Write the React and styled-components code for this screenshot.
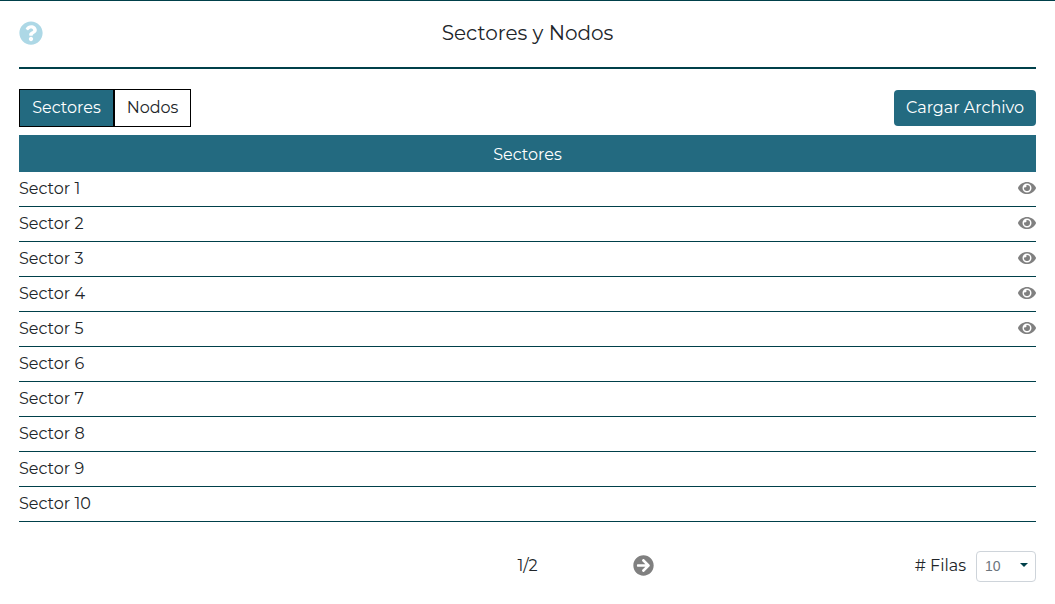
import React from "react";
import styled, { createGlobalStyle } from "styled-components";
import { FaQuestionCircle, FaEye, FaArrowCircleRight } from "react-icons/fa";

const GlobalStyle = createGlobalStyle`
  *, *::before, *::after { box-sizing: border-box; }
  body {
    margin: 0;
    background: #fff;
    color: #212529;
    font-family: Montserrat, Inter, sans-serif;
    font-size: 16px;
    line-height: 24px;
    font-weight: 400;
  }
  button { font: inherit; margin: 0; cursor: pointer; }
`;

const Page = styled.main`
  height: 604px;
  padding: 0 19px;
  border-top: 1px solid #00404a;
  overflow: hidden;
`;

const Header = styled.header`
  display: grid;
  grid-template-columns: 24px 1fr 24px;
  align-items: center;
  height: 68px;
  padding-bottom: 2px;
  border-bottom: 2px solid #00404a;
`;

const HelpIcon = styled(FaQuestionCircle)`
  width: 24px;
  height: 24px;
  color: #add8e6;
`;

const Title = styled.h1`
  margin: 0;
  font-size: 20px;
  font-weight: 400;
  text-align: center;
`;

const Toolbar = styled.div`
  display: flex;
  justify-content: space-between;
  align-items: center;
  height: 38px;
  margin-top: 20px;
`;

const Tabs = styled.div`
  display: flex;
`;

const Tab = styled.button`
  width: ${({ $width }) => $width}px;
  height: 38px;
  padding: 0;
  border: 1px solid #000;
  background: ${({ $active }) => ($active ? "#236a80" : "#fff")};
  color: ${({ $active }) => ($active ? "#fff" : "#212529")};
`;

const UploadButton = styled.button`
  width: 142px;
  height: 36px;
  padding: 0;
  border: 0;
  border-radius: 4px;
  background: #236a80;
  color: #fff;
`;

const TableHead = styled.div`
  height: 37px;
  margin-top: 8px;
  padding-top: 8px;
  background: #236a80;
  color: #fff;
  text-align: center;
`;

const Rows = styled.ul`
  margin: 0;
  padding: 0;
  list-style: none;
`;

const Row = styled.li`
  display: flex;
  justify-content: space-between;
  align-items: flex-start;
  height: 35px;
  padding-top: 5px;
  border-bottom: 1px solid #00404a;
`;

const EyeIcon = styled(FaEye)`
  width: 18px;
  height: 16px;
  margin-top: 3px;
  color: #808080;
`;

const Footer = styled.footer`
  display: grid;
  grid-template-columns: 1fr auto 1fr;
  align-items: center;
  height: 31px;
  margin-top: 29px;
`;

const PageCount = styled.span`
  grid-column: 2;
  padding-bottom: 2px;
`;

const FooterRight = styled.div`
  display: flex;
  align-items: center;
  justify-content: space-between;
  padding-left: 95px;
`;

const NextIcon = styled(FaArrowCircleRight)`
  width: 21px;
  height: 21px;
  margin-bottom: 2px;
  color: #808080;
`;

const RowsPerPage = styled.label`
  display: flex;
  align-items: center;
  gap: 10px;
`;

const RowsLabel = styled.span`
  padding-bottom: 2px;
`;

const SelectBox = styled.button`
  display: flex;
  align-items: center;
  justify-content: space-between;
  width: 60px;
  height: 31px;
  padding: 0 7.5px 2px 8px;
  border: 1px solid #ced4da;
  border-radius: 4px;
  background: #fff;
  color: #6c757d;
  font-family: "Liberation Sans", Arial, sans-serif;
  font-size: 14px;
`;

const Caret = styled.svg`
  width: 8px;
  height: 4px;
  margin-top: -1px;
  fill: #00404a;
`;

const sectors = Array.from({ length: 10 }, (_, i) => ({
  name: `Sector ${i + 1}`,
  visible: i < 5,
}));

export default function App() {
  return (
    <>
      <GlobalStyle />
      <Page>
        <Header>
          <HelpIcon />
          <Title>Sectores y Nodos</Title>
        </Header>
        <Toolbar>
          <Tabs>
            <Tab $active $width={95}>Sectores</Tab>
            <Tab $width={77}>Nodos</Tab>
          </Tabs>
          <UploadButton>Cargar Archivo</UploadButton>
        </Toolbar>
        <TableHead>Sectores</TableHead>
        <Rows>
          {sectors.map(({ name, visible }) => (
            <Row key={name}>
              <span>{name}</span>
              {visible && <EyeIcon />}
            </Row>
          ))}
        </Rows>
        <Footer>
          <PageCount>1/2</PageCount>
          <FooterRight>
            <NextIcon />
            <RowsPerPage>
              <RowsLabel># Filas</RowsLabel>
              <SelectBox type="button">
                10
                <Caret viewBox="0 0 8 4">
                  <path d="M0 0h8L4 4z" />
                </Caret>
              </SelectBox>
            </RowsPerPage>
          </FooterRight>
        </Footer>
      </Page>
    </>
  );
}
